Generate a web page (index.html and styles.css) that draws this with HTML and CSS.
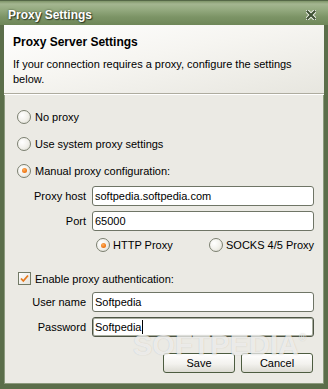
FILE: index.html
```html
<!DOCTYPE html>
<html>
<head>
<meta charset="utf-8">
<title>Proxy Settings</title>
<link rel="stylesheet" href="styles.css">
</head>
<body>
<div class="window">
  <div class="titlebar">
    <span class="title">Proxy Settings</span>
    <svg class="close" width="10" height="10" viewBox="0 0 10 10">
      <path d="M1.5 1.5 L8.5 8.5 M8.5 1.5 L1.5 8.5" stroke="#f4f6ef" stroke-width="4" stroke-linecap="square"/>
      <path d="M1.5 1.5 L8.5 8.5 M8.5 1.5 L1.5 8.5" stroke="#3f5234" stroke-width="2.2" stroke-linecap="square"/>
    </svg>
  </div>
  <div class="client">
    <div class="header">
      <div class="h-title">Proxy Server Settings</div>
      <div class="h-desc">If your connection requires a proxy, configure the settings below.</div>
    </div>
    <div class="content">
      <div class="radio-row"><span class="radio"></span><span>No proxy</span></div>
      <div class="radio-row"><span class="radio"></span><span>Use system proxy settings</span></div>
      <div class="radio-row"><span class="radio on"></span><span>Manual proxy configuration:</span></div>

      <div class="field-row host"><span class="label">Proxy host</span><div class="field">softpedia.softpedia.com</div></div>
      <div class="field-row port"><span class="label">Port</span><div class="field">65000</div></div>

      <div class="type-row">
        <div class="opt http"><span class="radio on"></span><span>HTTP Proxy</span></div>
        <div class="opt"><span class="radio"></span><span>SOCKS 4/5 Proxy</span></div>
      </div>

      <div class="check-row">
        <span class="check">
          <svg width="11" height="11" viewBox="0 0 11 11"><path d="M2 5.5 L4.3 8 L9 2.5" fill="none" stroke="#e6781c" stroke-width="1.8"/></svg>
        </span>
        <span>Enable proxy authentication:</span>
      </div>

      <div class="field-row user"><span class="label">User name</span><div class="field">Softpedia</div></div>
      <div class="field-row pass"><span class="label">Password</span><div class="field focused">Softpedia<span class="caret"></span></div></div>

      <div class="buttons">
        <button class="btn">Save</button>
        <button class="btn">Cancel</button>
      </div>
    </div>
    <div class="watermark">SOFTPEDIA<span class="reg">®</span></div>
  </div>
</div>
</body>
</html>
```
FILE: styles.css
```css
html, body {
  margin: 0;
  padding: 0;
}
body {
  width: 328px;
  height: 389px;
  overflow: hidden;
  font-family: "Liberation Sans", Arial, sans-serif;
  font-size: 11px;
  color: #000;
}
.window {
  width: 328px;
  height: 389px;
  background: #5b6e4a;
  display: flex;
  flex-direction: column;
}
.titlebar {
  height: 25px;
  flex: none;
  box-sizing: border-box;
  display: flex;
  justify-content: space-between;
  align-items: flex-start;
  padding: 8px 12px 0 8px;
  background: linear-gradient(to bottom, #7f9569 0px, #a4b691 3px, #93a97e 9px, #7c9466 16px, #6d8557 25px);
  border-top: 1px solid #556847;
}
.title {
  font-size: 12px;
  font-weight: bold;
  line-height: 14px;
  color: #fff;
  margin-top: -1px;
  text-shadow: 1px 1px 1px #2e3a26, 0 0 2px #3d4c32;
}
.close {
  display: block;
  margin-top: 1px;
}
.client {
  position: relative;
  flex: none;
  height: 359px;
  margin: 0 4px;
  background: #ebeae4;
  box-shadow: inset 1px 0 0 #8c9a7d, inset -1px 0 0 #8c9a7d, inset 0 -1px 0 #8c9a7d;
}
.header {
  height: 69px;
  box-sizing: border-box;
  padding: 10px 24px 0 9px;
  background: linear-gradient(to bottom right, #ffffff 0%, #f6f5f1 45%, #e7e6df 100%);
  border-bottom: 1px solid #aeac9f;
  box-shadow: 0 1px 0 #ffffff;
}
.h-title {
  font-size: 12px;
  font-weight: bold;
  line-height: 15px;
}
.h-desc {
  margin-top: 7px;
  line-height: 15px;
}
.content {
  padding-top: 9px;
  display: flex;
  flex-direction: column;
}
.radio-row {
  height: 27px;
  display: flex;
  align-items: center;
  padding-left: 13px;
  gap: 4px;
}
.radio {
  width: 14px;
  height: 14px;
  box-sizing: border-box;
  border-radius: 50%;
  border: 1px solid #7b8070;
  background: radial-gradient(circle at 35% 35%, #ffffff 0%, #f1f0ea 55%, #d7d6cd 100%);
  flex: none;
  position: relative;
}
.radio.on::after {
  content: "";
  position: absolute;
  left: 3.5px;
  top: 3.5px;
  width: 5px;
  height: 5px;
  border-radius: 50%;
  background: radial-gradient(circle at 40% 35%, #ffb060 0%, #f07a18 60%, #d8620c 100%);
}
.field-row {
  display: flex;
  align-items: center;
  height: 20px;
  gap: 6px;
}
.field-row.host { margin-top: 2px; }
.field-row.port { margin-top: 5px; }
.field-row.user { margin-top: 5px; }
.field-row.pass { margin-top: 5px; }
.label {
  width: 82px;
  text-align: right;
  flex: none;
}
.field {
  width: 222px;
  height: 20px;
  box-sizing: border-box;
  border: 1px solid #6f7566;
  border-radius: 3px;
  background: #fff;
  padding-left: 2px;
  line-height: 18px;
  white-space: nowrap;
  display: flex;
  align-items: center;
}
.field.focused {
  border-color: #4e5545;
  box-shadow: inset 0 0 0 1px #a9ae9f;
}
.caret {
  display: inline-block;
  width: 1px;
  height: 14px;
  background: #000;
  margin-left: 1px;
}
.type-row {
  margin-top: 3px;
  height: 22px;
  display: flex;
  align-items: center;
  padding-left: 92px;
}
.opt {
  display: flex;
  align-items: center;
  gap: 3px;
}
.opt.http {
  width: 113px;
}
.check-row {
  margin-top: 14px;
  height: 17px;
  display: flex;
  align-items: center;
  padding-left: 14px;
  gap: 4px;
}
.check {
  width: 13px;
  height: 13px;
  box-sizing: border-box;
  border: 1px solid #727a66;
  background: linear-gradient(to bottom right, #ffffff, #e4e3db);
  display: flex;
  align-items: center;
  justify-content: center;
  flex: none;
}
.check svg { display: block; }
.buttons {
  margin-top: 16px;
  display: flex;
  justify-content: flex-end;
  gap: 6px;
  padding-right: 11px;
}
.btn {
  width: 72px;
  height: 20px;
  box-sizing: border-box;
  padding: 0;
  margin: 0;
  border: 1px solid #4d5c40;
  border-radius: 3px;
  background: linear-gradient(to bottom, #ffffff 0%, #f3f2ee 55%, #dcdbd3 100%);
  font-family: "Liberation Sans", Arial, sans-serif;
  font-size: 11px;
  color: #000;
  line-height: 18px;
}
.watermark {
  position: absolute;
  left: 129px;
  top: 312px;
  height: 16px;
  font-size: 29px;
  line-height: 16px;
  font-weight: bold;
  color: rgba(255, 255, 255, 0.7);
  text-shadow: 0 0 1px rgba(90, 90, 80, 0.3);
  pointer-events: none;
  white-space: nowrap;
}
.watermark .reg {
  font-size: 10px;
  line-height: 10px;
  vertical-align: top;
  position: relative;
  top: -4px;
}
```
